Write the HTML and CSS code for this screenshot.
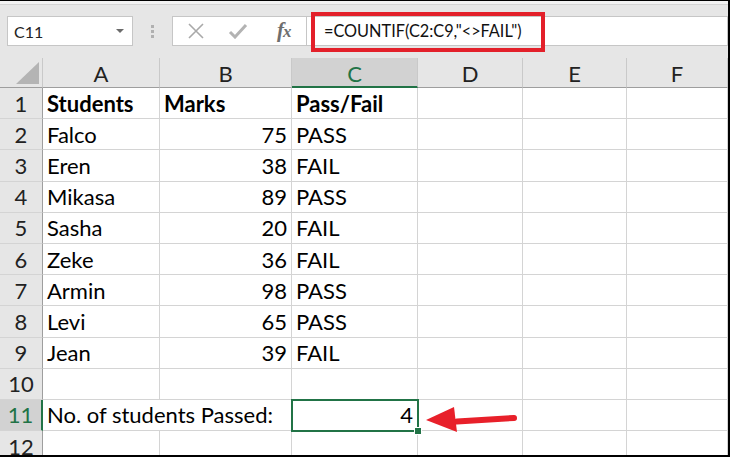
FILE: index.html
```html
<!DOCTYPE html>
<html>
<head>
<meta charset="utf-8">
<link rel="stylesheet" href="styles.css">
</head>
<body>
<div class="app">
  <div class="ribbon-edge"></div>
  <div class="toolbar">
    <div class="namebox">
      <span class="name">C11</span>
      <span class="caret"></span>
    </div>
    <div class="grip"><i></i><i></i><i></i></div>
    <div class="fxbox">
      <svg class="ico" width="18" height="16" viewBox="0 0 18 16"><path d="M2 1 L16 15 M16 1 L2 15" stroke="#a9a9a9" stroke-width="1.6" fill="none"/></svg>
      <svg class="ico" width="20" height="16" viewBox="0 0 20 16"><path d="M2 9 L7 14 L18 2" stroke="#b3b3b3" stroke-width="3" fill="none"/></svg>
      <span class="fx">f<span class="x">x</span></span>
    </div>
    <div class="formula">=COUNTIF(C2:C9,"&lt;&gt;FAIL")</div>
    <div class="highlight"></div>
  </div>
  <div class="sheet">
    <div class="hd corner"><span class="tri"></span></div>
    <div class="hd col">A</div>
    <div class="hd col">B</div>
    <div class="hd col sel">C</div>
    <div class="hd col">D</div>
    <div class="hd col">E</div>
    <div class="hd col">F</div>

    <div class="hd row">1</div><div class="c b">Students</div><div class="c b">Marks</div><div class="c b">Pass/Fail</div><div class="c"></div><div class="c"></div><div class="c"></div>
    <div class="hd row">2</div><div class="c">Falco</div><div class="c n">75</div><div class="c">PASS</div><div class="c"></div><div class="c"></div><div class="c"></div>
    <div class="hd row">3</div><div class="c">Eren</div><div class="c n">38</div><div class="c">FAIL</div><div class="c"></div><div class="c"></div><div class="c"></div>
    <div class="hd row">4</div><div class="c">Mikasa</div><div class="c n">89</div><div class="c">PASS</div><div class="c"></div><div class="c"></div><div class="c"></div>
    <div class="hd row">5</div><div class="c">Sasha</div><div class="c n">20</div><div class="c">FAIL</div><div class="c"></div><div class="c"></div><div class="c"></div>
    <div class="hd row">6</div><div class="c">Zeke</div><div class="c n">36</div><div class="c">FAIL</div><div class="c"></div><div class="c"></div><div class="c"></div>
    <div class="hd row">7</div><div class="c">Armin</div><div class="c n">98</div><div class="c">PASS</div><div class="c"></div><div class="c"></div><div class="c"></div>
    <div class="hd row">8</div><div class="c">Levi</div><div class="c n">65</div><div class="c">PASS</div><div class="c"></div><div class="c"></div><div class="c"></div>
    <div class="hd row">9</div><div class="c">Jean</div><div class="c n">39</div><div class="c">FAIL</div><div class="c"></div><div class="c"></div><div class="c"></div>
    <div class="hd row">10</div><div class="c"></div><div class="c"></div><div class="c"></div><div class="c"></div><div class="c"></div><div class="c"></div>
    <div class="hd row sel">11</div><div class="c span2">No. of students Passed:</div><div class="c n active">4<span class="handle"></span></div><div class="c"></div><div class="c"></div><div class="c"></div>
    <div class="hd row">12</div><div class="c"></div><div class="c"></div><div class="c"></div><div class="c"></div><div class="c"></div><div class="c"></div>

    <svg class="arrow" width="100" height="34" viewBox="0 0 100 34">
      <path d="M32 16.5 L89 13" stroke="#e8202a" stroke-width="6" stroke-linecap="round" fill="none"/>
      <path d="M1 15 L29 2 L32 27 Z" fill="#e8202a"/>
    </svg>
  </div>
</div>
</body>
</html>
```
FILE: styles.css
```css
html, body {
  margin: 0;
  padding: 0;
  background: #ffffff;
}
.app {
  width: 728px;
  height: 454px;
  border-top: 1px solid #000;
  border-right: 2px solid #000;
  border-bottom: 2px solid #000;
  overflow: hidden;
  font-family: "Lato", "Open Sans", sans-serif;
  position: relative;
}
.ribbon-edge {
  height: 3px;
  background: #f2f2f2;
  border-bottom: 1px solid #d4d4d4;
}
.toolbar {
  position: relative;
  height: 53px;
  box-sizing: border-box;
  padding-top: 11px;
  background: #e6e6e6;
  display: flex;
  align-items: flex-start;
}
.namebox {
  margin-left: 7px;
  width: 126px;
  height: 30px;
  box-sizing: border-box;
  background: #fff;
  border: 1px solid #c6c6c6;
  display: flex;
  align-items: center;
  justify-content: space-between;
  padding: 0 8px 0 6px;
}
.name {
  font-size: 16px;
  color: #222;
}
.caret {
  width: 0;
  height: 0;
  border-left: 4px solid transparent;
  border-right: 4px solid transparent;
  border-top: 4px solid #6b6b6b;
}
.grip {
  width: 39px;
  height: 30px;
  display: flex;
  flex-direction: column;
  align-items: center;
  justify-content: center;
  gap: 2px;
}
.grip i {
  display: block;
  width: 3px;
  height: 3px;
  background: #b0b0b0;
}
.fxbox {
  width: 135px;
  height: 30px;
  box-sizing: border-box;
  background: #fff;
  border: 1px solid #c6c6c6;
  display: flex;
  align-items: center;
  padding-left: 14px;
  gap: 23px;
}
.fx {
  font-family: "Liberation Serif", serif;
  font-style: italic;
  font-weight: bold;
  font-size: 21px;
  line-height: 20px;
  color: #6e6e6e;
  margin-left: 6px;
  letter-spacing: -1px;
}
.fx .x {
  font-size: 17px;
}
.formula {
  flex: 1;
  height: 30px;
  box-sizing: border-box;
  background: #fff;
  border: 1px solid #c6c6c6;
  border-left: none;
  padding-left: 17px;
  font-size: 16.3px;
  line-height: 28px;
  color: #111;
}
.highlight {
  position: absolute;
  left: 311px;
  top: 7px;
  width: 234px;
  height: 40px;
  box-sizing: border-box;
  border: 4px solid #e3202a;
}
.sheet {
  position: relative;
  display: grid;
  grid-template-columns: 43px 117px 132px 126px 105px 104px 101px;
  grid-template-rows: 30px repeat(12, 31.2px);
  font-size: 22px;
  color: #000;
}
.hd {
  background: #e6e6e6;
  box-sizing: border-box;
  display: flex;
  align-items: center;
  justify-content: center;
  color: #222;
}
.col {
  border-right: 1px solid #c9c9c9;
  border-bottom: 1px solid #9e9e9e;
  padding-top: 2px;
}
.corner {
  border-right: 1px solid #c9c9c9;
  border-bottom: 1px solid #9e9e9e;
  position: relative;
}
.tri {
  position: absolute;
  right: 3px;
  bottom: 3px;
  width: 0;
  height: 0;
  border-left: 23px solid transparent;
  border-bottom: 22px solid #b4b4b4;
}
.row {
  border-right: 1px solid #9e9e9e;
  border-bottom: 1px solid #d4d4d4;
}
.col.sel {
  background: #d2d2d2;
  border-bottom: 2px solid #217346;
  color: #217346;
}
.row.sel {
  background: #d2d2d2;
  border-right: 2px solid #217346;
  color: #217346;
}
.c {
  box-sizing: border-box;
  border-right: 1px solid #d4d4d4;
  border-bottom: 1px solid #d4d4d4;
  padding: 0 4px;
  display: flex;
  align-items: center;
  white-space: nowrap;
  background: #fff;
}
.c.b {
  font-weight: bold;
}
.c.n {
  justify-content: flex-end;
}
.c.span2 {
  grid-column: span 2;
}
.c.active {
  position: relative;
  outline: 2px solid #217346;
  outline-offset: -1px;
  z-index: 2;
}
.handle {
  position: absolute;
  right: -5px;
  bottom: -5px;
  width: 6px;
  height: 6px;
  background: #217346;
  border: 1px solid #fff;
}
.arrow {
  position: absolute;
  left: 425px;
  top: 347px;
  z-index: 3;
}
```
